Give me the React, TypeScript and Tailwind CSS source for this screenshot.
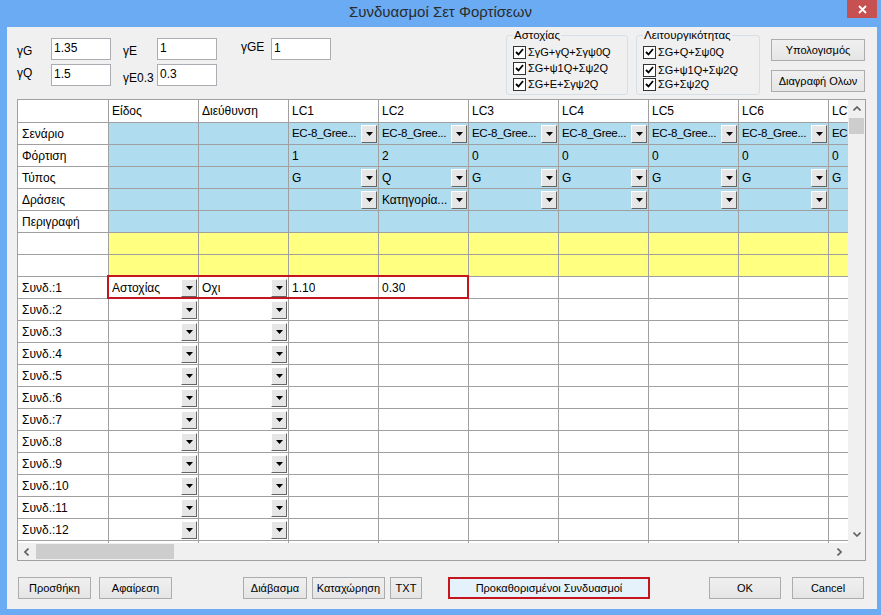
import React from 'react';

const Arrow = () => (
  <svg width="7" height="4" viewBox="0 0 7 4">
    <path d="M0 0h7L3.5 4z" fill="#000" />
  </svg>
);

// dropdown button drawn inside grid cells
const Drop = () => (
  <span className="ml-auto mr-[1px] w-[16px] h-[18px] shrink-0 flex justify-center pt-[6px] bg-[#e6e6e6] border border-t-white border-l-white border-r-[#646464] border-b-[#646464]">
    <Arrow />
  </span>
);

const Check = ({ label }: { label: string }) => (
  <div className="h-[16px] flex items-center">
    <span className="w-[13px] h-[13px] border border-[#333] bg-white flex items-center justify-center">
      <svg width="9" height="8" viewBox="0 0 9 8">
        <path d="M1 4l2.5 2.5L8 1" stroke="#000" strokeWidth="1.8" fill="none" />
      </svg>
    </span>
    <span className="ml-[2px] text-[11px]">{label}</span>
  </div>
);

const Btn = ({ className, children }: { className: string; children: React.ReactNode }) => (
  <button className={'h-[22px] border border-[#acacac] bg-linear-to-b from-[#f0f0f0] to-[#e5e5e5] text-[11px] text-black flex items-center justify-center ' + className}>
    {children}
  </button>
);

const Field = ({ label, value, lw, lcls = '' }: { label: string; value: string; lw: string; lcls?: string }) => (
  <div className="flex items-center h-[22px]">
    <span className={'text-[12px] ' + lw + ' ' + lcls}>{label}</span>
    <div className="w-[60px] h-[22px] border border-[#abadb3] bg-white pl-[2px] text-[12px] flex items-center pb-[2px]">{value}</div>
  </div>
);

type Cell = { t?: string; drop?: boolean };

const lcHeaders = ['LC1', 'LC2', 'LC3', 'LC4', 'LC5', 'LC6', 'LC7'];

const blueRows: { name: string; cells: Cell[] }[] = [
  { name: 'Σενάριο', cells: lcHeaders.map(() => ({ t: 'EC-8_Gree...', drop: true })) },
  { name: 'Φόρτιση', cells: ['1', '2', '0', '0', '0', '0', '0'].map((t) => ({ t })) },
  { name: 'Τύπος', cells: ['G', 'Q', 'G', 'G', 'G', 'G', 'G'].map((t) => ({ t, drop: true })) },
  { name: 'Δράσεις', cells: ['', 'Κατηγορία...', '', '', '', '', ''].map((t) => ({ t, drop: true })) },
  { name: 'Περιγραφή', cells: lcHeaders.map(() => ({})) },
];

const GridCell = ({ bg, t, drop, small }: { bg: string; t?: string; drop?: boolean; small?: boolean }) => (
  <div className={'w-[90px] h-full shrink-0 border-r border-[#a0a0a0] flex items-center pl-[3px] ' + bg}>
    <span className={'whitespace-nowrap overflow-hidden ' + (small ? 'text-[11.5px] tracking-[-0.3px]' : 'text-[12px]')}>{t}</span>
    {drop && <Drop />}
  </div>
);

const RowHead = ({ t }: { t?: string }) => (
  <div className="w-[91px] h-full shrink-0 border-r border-[#a0a0a0] bg-white flex items-center pl-[4px] text-[12px]">{t}</div>
);

export default function App() {
  const sunRows = Array.from({ length: 13 }, (_, i) => i + 1);

  return (
    <div className="w-[881px] h-[615px] bg-[#6aabf3] flex flex-col font-['Liberation_Sans',Arial,sans-serif] text-black overflow-hidden">
      {/* title bar */}
      <div className="h-[27px] shrink-0 relative flex items-center justify-center">
        <span className="text-[15px] text-[#2b2b2b] pb-[2px]">Συνδυασμοί Σετ Φορτίσεων</span>
        <div className="absolute right-[4px] top-0 w-[30px] h-[18px] bg-[#c75050] flex items-center justify-center">
          <svg width="9" height="9" viewBox="0 0 9 9">
            <path d="M1 1l7 7M8 1L1 8" stroke="#fff" strokeWidth="1.8" />
          </svg>
        </div>
      </div>

      {/* client */}
      <div className="flex-1 ml-[7px] mr-[4px] mb-[6px] bg-[#f0f0f0] px-[10px] flex flex-col">
        {/* top parameters */}
        <div className="h-[72px] shrink-0 flex items-start">
          <div className="mt-[11px] flex flex-col gap-[4px]">
            <Field label="γG" value="1.35" lw="w-[34px]" lcls="pt-[3px]" />
            <Field label="γQ" value="1.5" lw="w-[34px]" lcls="pb-[4px]" />
          </div>
          <div className="ml-[12px] mt-[11px] flex flex-col gap-[4px]">
            <Field label="γE" value="1" lw="w-[34px]" lcls="pt-[4px]" />
            <Field label="γE0.3" value="0.3" lw="w-[34px]" lcls="pt-[6px]" />
          </div>
          <div className="ml-[24px] mt-[11px]">
            <Field label="γGE" value="1" lw="w-[30px]" lcls="pb-[5px]" />
          </div>
          <fieldset className="ml-[175px] mt-[1px] w-[122px] h-[67px] border border-[#d5dfe5] rounded-[3px] px-[6px]">
            <legend className="px-[1px] text-[11.5px] leading-[14px]">Αστοχίας</legend>
            <div className="pt-[2px]">
              <Check label="ΣγG+γQ+Σγψ0Q" />
              <Check label="ΣG+ψ1Q+Σψ2Q" />
              <Check label="ΣG+E+Σγψ2Q" />
            </div>
          </fieldset>
          <fieldset className="ml-[8px] mt-[1px] w-[124px] h-[67px] border border-[#d5dfe5] rounded-[3px] px-[6px]">
            <legend className="px-[1px] text-[11.5px] leading-[14px]">Λειτουργικότητας</legend>
            <div className="pt-[2px]">
              <Check label="ΣG+Q+Σψ0Q" />
              <div className="pt-[2px]">
                <Check label="ΣG+ψ1Q+Σψ2Q" />
              </div>
              <div className="-mt-[2px]">
                <Check label="ΣG+Σψ2Q" />
              </div>
            </div>
          </fieldset>
          <div className="ml-[11px] mt-[12px] flex flex-col gap-[9px]">
            <Btn className="w-[94px]">Υπολογισμός</Btn>
            <Btn className="w-[94px]">Διαγραφή Ολων</Btn>
          </div>
        </div>

        {/* grid */}
        <div className="w-[849px] h-[462px] shrink-0 border border-[#a0a0a0] bg-[#f0f0f0] flex flex-col">
          <div className="h-[443px] flex">
            <div className="w-[830px] h-full overflow-hidden bg-white flex flex-col">
              {/* header */}
              <div className="h-[23px] shrink-0 flex border-b border-[#a0a0a0]">
                <RowHead />
                <GridCell bg="bg-white" t="Είδος" />
                <GridCell bg="bg-white" t="Διεύθυνση" />
                {lcHeaders.map((h) => (
                  <GridCell key={h} bg="bg-white" t={h} />
                ))}
              </div>
              {blueRows.map((r) => (
                <div key={r.name} className="h-[22px] shrink-0 flex border-b border-[#a0a0a0]">
                  <RowHead t={r.name} />
                  <GridCell bg="bg-[#b0dcf0]" />
                  <GridCell bg="bg-[#b0dcf0]" />
                  {r.cells.map((c, i) => (
                    <GridCell key={i} bg="bg-[#b0dcf0]" t={c.t} drop={c.drop} small={c.t === 'EC-8_Gree...'} />
                  ))}
                </div>
              ))}
              {[0, 1].map((y) => (
                <div key={y} className="h-[22px] shrink-0 flex border-b border-[#a0a0a0]">
                  <RowHead />
                  <GridCell bg="bg-[#ffff80]" />
                  <GridCell bg="bg-[#ffff80]" />
                  {lcHeaders.map((h) => (
                    <GridCell key={h} bg="bg-[#ffff80]" />
                  ))}
                </div>
              ))}
              {sunRows.map((n) => (
                <div key={n} className="h-[22px] shrink-0 flex border-b border-[#a0a0a0] relative">
                  <RowHead t={'Συνδ.:' + n} />
                  <GridCell bg="bg-white" t={n === 1 ? 'Αστοχίας' : ''} drop />
                  <GridCell bg="bg-white" t={n === 1 ? 'Οχι' : ''} drop />
                  {lcHeaders.map((h, i) => (
                    <GridCell key={h} bg="bg-white" t={n === 1 ? (i === 0 ? '1.10' : i === 1 ? '0.30' : '') : ''} />
                  ))}
                  {n === 1 && (
                    <div className="absolute left-[89px] top-[-2px] w-[362px] h-[24px] border-2 border-[#c4161c]" />
                  )}
                </div>
              ))}
            </div>
            {/* vertical scrollbar */}
            <div className="w-[17px] h-full bg-[#f0f0f0] flex flex-col items-center">
              <div className="h-[17px] flex items-center justify-center">
                <svg width="8" height="5" viewBox="0 0 8 5">
                  <path d="M0.5 4.5L4 1l3.5 3.5" stroke="#606060" strokeWidth="1.6" fill="none" />
                </svg>
              </div>
              <div className="w-[15px] h-[16px] bg-[#cdcdcd] mt-[1px]" />
              <div className="flex-1" />
              <div className="h-[17px] flex items-center justify-center">
                <svg width="8" height="5" viewBox="0 0 8 5">
                  <path d="M0.5 0.5L4 4l3.5-3.5" stroke="#606060" strokeWidth="1.6" fill="none" />
                </svg>
              </div>
            </div>
          </div>
          {/* horizontal scrollbar */}
          <div className="h-[17px] flex bg-[#f0f0f0]">
            <div className="w-[830px] flex items-center">
              <div className="w-[17px] flex justify-center">
                <svg width="5" height="8" viewBox="0 0 5 8">
                  <path d="M4.5 0.5L1 4l3.5 3.5" stroke="#606060" strokeWidth="1.6" fill="none" />
                </svg>
              </div>
              <div className="w-[138px] h-[15px] bg-[#cdcdcd] ml-[1px]" />
              <div className="flex-1" />
              <div className="w-[17px] flex justify-center">
                <svg width="5" height="8" viewBox="0 0 5 8">
                  <path d="M0.5 0.5L4 4L0.5 7.5" stroke="#606060" strokeWidth="1.6" fill="none" />
                </svg>
              </div>
            </div>
          </div>
        </div>

        {/* bottom buttons */}
        <div className="mt-[16px] flex items-center">
          <Btn className="ml-[1px] w-[73px]">Προσθήκη</Btn>
          <Btn className="ml-[8px] w-[73px]">Αφαίρεση</Btn>
          <Btn className="ml-[71px] w-[64px]">Διάβασμα</Btn>
          <Btn className="ml-[5px] w-[73px]">Καταχώρηση</Btn>
          <Btn className="ml-[5px] w-[32px]">TXT</Btn>
          <div className="ml-[26px] w-[202px] h-[22px] border-2 border-[#c4161c] bg-[#e5f1fb] flex items-center justify-center text-[11px]">
            Προκαθορισμένοι Συνδυασμοί
          </div>
          <Btn className="ml-[59px] w-[72px]">OK</Btn>
          <Btn className="ml-[11px] w-[72px]">Cancel</Btn>
        </div>
      </div>
    </div>
  );
}
